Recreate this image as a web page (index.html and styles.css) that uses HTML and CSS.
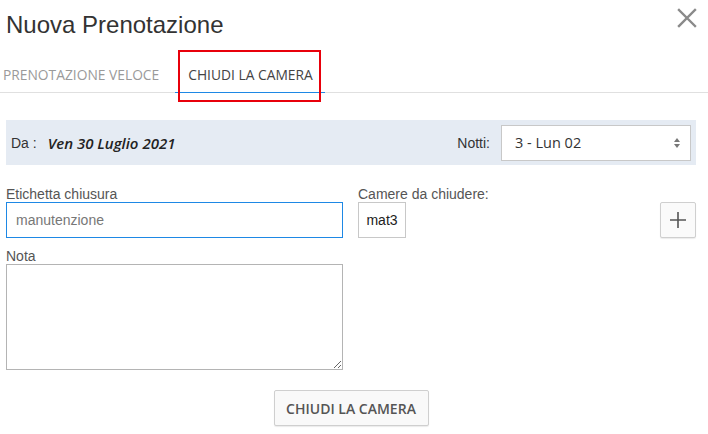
FILE: index.html
```html
<!DOCTYPE html>
<html lang="it">
<head>
<meta charset="utf-8">
<title>Nuova Prenotazione</title>
<link rel="stylesheet" href="styles.css">
</head>
<body>
<div class="modal">
  <div class="header">
    <h1 class="title">Nuova Prenotazione</h1>
    <svg class="close" width="20" height="20" viewBox="0 0 20 20" aria-label="Chiudi">
      <path d="M2 2 L18 18 M18 2 L2 18" stroke="#8a8a8a" stroke-width="2.4" stroke-linecap="square" fill="none"/>
    </svg>
  </div>
  <div class="tabs">
    <div class="tab tab-first">PRENOTAZIONE VELOCE</div>
    <div class="tab tab-active">CHIUDI LA CAMERA<span class="highlight"></span></div>
  </div>

  <div class="band">
    <div class="from">
      <span class="from-label">Da :</span>
      <span class="from-date">Ven 30 Luglio 2021</span>
    </div>
    <div class="nights">
      <span class="nights-label">Notti:</span>
      <div class="select">
        <span>3 - Lun 02</span>
        <svg width="8" height="12" viewBox="0 0 8 12">
          <path d="M4 1 L7 5 L1 5 Z M4 11 L7 7 L1 7 Z" fill="#777"/>
        </svg>
      </div>
    </div>
  </div>

  <div class="form-row">
    <div class="col-left">
      <label class="label">Etichetta chiusura</label>
      <div class="input">manutenzione</div>
      <label class="label label-nota">Nota</label>
      <textarea class="textarea"></textarea>
    </div>
    <div class="col-right">
      <label class="label">Camere da chiudere:</label>
      <div class="rooms">
        <div class="room">mat3</div>
        <button class="plus" aria-label="Aggiungi">
          <svg width="18" height="18" viewBox="0 0 18 18">
            <path d="M9 1 V17 M1 9 H17" stroke="#555" stroke-width="1.6" fill="none"/>
          </svg>
        </button>
      </div>
    </div>
  </div>

  <div class="actions">
    <button class="submit">CHIUDI LA CAMERA</button>
  </div>
</div>
</body>
</html>
```

FILE: styles.css
```css
* { box-sizing: border-box; }
html, body { margin: 0; padding: 0; background: #fff; }
body { font-family: "Liberation Sans", Arial, sans-serif; color: #333; }

.modal { width: 708px; height: 434px; overflow: hidden; }

.header {
  display: flex;
  justify-content: space-between;
  align-items: flex-start;
  padding: 13px 11px 0 6px;
}
.title {
  margin: 0;
  font-family: "Liberation Sans", Arial, sans-serif;
  font-weight: normal;
  font-size: 24px;
  line-height: 24px;
  color: #333;
}
.close { margin-top: -5px; }

.tabs {
  display: flex;
  margin-top: 21px;
  border-bottom: 1px solid #e0e0e0;
}
.tab {
  font-family: "Open Sans", sans-serif;
  font-size: 13.8px;
  line-height: 34px;
  height: 35px;
  color: #9a9a9a;
  white-space: nowrap;
  margin-bottom: -1px;
  border-bottom: 1px solid transparent;
}
.tab-first { padding: 0 16px 0 3px; }
.tab-active {
  position: relative;
  padding: 0 12px 0 13px;
  color: #444;
  border-bottom-color: #1e88e5;
}
.highlight {
  position: absolute;
  left: 3px;
  right: 4px;
  top: -8px;
  height: 52px;
  border: 2px solid #e8000b;
}

.band {
  margin: 27px 12px 0 6px;
  height: 45px;
  background: #e5ebf3;
  display: flex;
  align-items: center;
  justify-content: space-between;
  padding: 0 5px 0 5px;
}
.from { display: flex; align-items: center; }
.from-label { font-size: 14px; color: #333; }
.from-date {
  margin-left: 11px;
  font-family: "Open Sans", sans-serif;
  font-style: italic;
  font-weight: 600;
  font-size: 15px;
  color: #222;
}
.nights { display: flex; align-items: center; }
.nights-label { font-size: 14px; color: #333; margin-right: 11px; }
.select {
  width: 190px;
  height: 36px;
  background: #fff;
  border: 1px solid #c8c8c8;
  display: flex;
  align-items: center;
  justify-content: space-between;
  padding: 0 9px 0 13px;
  font-family: "Open Sans", sans-serif;
  font-size: 14.5px;
  color: #333;
}

.form-row {
  display: flex;
  margin: 21px 12px 0 6px;
}
.col-left { width: 337px; display: flex; flex-direction: column; }
.col-right { flex: 1; margin-left: 15px; display: flex; flex-direction: column; }
.label {
  font-size: 14px;
  line-height: 16px;
  color: #555;
}
.label-nota { margin-top: 10px; }
.input {
  height: 36px;
  border: 1px solid #1e88e5;
  padding: 0 9px;
  display: flex;
  align-items: center;
  font-size: 14px;
  color: #777;
}
.textarea {
  display: block;
  width: 337px;
  height: 106px;
  margin: 0;
  border: 1px solid #b4b4b4;
  resize: both;
  font-family: "Liberation Sans", Arial, sans-serif;
}
.rooms { display: flex; justify-content: space-between; align-items: flex-start; }
.room {
  width: 48px;
  height: 36px;
  border: 1px solid #c8c8c8;
  display: flex;
  align-items: center;
  justify-content: center;
  font-size: 14px;
  color: #222;
}
.plus {
  width: 36px;
  height: 36px;
  margin: 0;
  padding: 0;
  background: #fafafa;
  border: 1px solid #cfcfcf;
  border-radius: 2px;
  box-shadow: 0 1px 1px rgba(0,0,0,0.08);
  display: flex;
  align-items: center;
  justify-content: center;
}

.actions {
  display: flex;
  justify-content: center;
  margin: 20px 12px 0 6px;
}
.submit {
  height: 36px;
  width: 155px;
  margin: 0;
  padding: 0;
  background: #f9f9f9;
  border: 1px solid #cfcfcf;
  border-radius: 2px;
  box-shadow: 0 1px 1px rgba(0,0,0,0.08);
  font-family: "Open Sans", sans-serif;
  font-weight: 600;
  font-size: 14px;
  color: #555;
}
```
